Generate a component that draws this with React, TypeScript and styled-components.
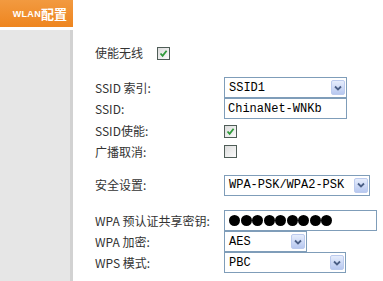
import styled, { createGlobalStyle } from "styled-components"

const GlobalStyle = createGlobalStyle`
  html, body {
    margin: 0;
    padding: 0;
    background: #fff;
  }
  body {
    width: 383px;
    height: 281px;
    overflow: hidden;
    font-family: "Noto Sans CJK SC", "Noto Sans", sans-serif;
  }
`

const Page = styled.div`
  display: flex;
  width: 383px;
  height: 281px;
`

const Sidebar = styled.div`
  width: 73px;
  display: flex;
  flex-direction: column;
`

const SideHeader = styled.div`
  height: 27px;
  background: linear-gradient(#f29a40, #ee851f);
  color: #fff;
  font-weight: bold;
  display: flex;
  align-items: center;
  justify-content: flex-end;
  padding-right: 6px;
  box-sizing: border-box;
`

const HeaderLatin = styled.span`
  font-family: "Liberation Sans", sans-serif;
  font-size: 9px;
  letter-spacing: 0.3px;
`

const HeaderCjk = styled.span`
  font-family: "Noto Sans CJK SC", sans-serif;
  font-size: 13px;
  line-height: 1;
`

const SideBody = styled.div`
  flex: 1;
  margin-top: 3px;
  background: #e6e6e6;
  border-right: 3px solid #d2d2d2;
`

const Main = styled.div`
  flex: 1;
  padding: 43px 0 0 22px;
`

const Row = styled.div<{ $h: number; $mt?: number; $label?: number }>`
  display: grid;
  grid-template-columns: ${(p) => p.$label ?? 129}px auto;
  align-items: center;
  height: ${(p) => p.$h}px;
  margin-top: ${(p) => p.$mt ?? 0}px;
`

const Label = styled.div`
  font-size: 12px;
  color: #333;
  white-space: nowrap;
  line-height: 1;
`

const Field = styled.div<{ $w: number }>`
  width: ${(p) => p.$w}px;
  height: 21px;
  box-sizing: border-box;
  border: 1px solid #7f9db9;
  background: #fff;
  display: flex;
  align-items: center;
  padding-left: 3px;
  font-family: "Liberation Mono", monospace;
  font-size: 12px;
  color: #000;
`

const SelectValue = styled.span`
  flex: 1;
  padding-left: 1px;
`

const ArrowButton = styled.div`
  width: 14px;
  height: 15px;
  margin-right: 1px;
  box-sizing: border-box;
  border: 1px solid #bccbee;
  border-radius: 2px;
  background: linear-gradient(#e6edfc, #b7c8f0);
  display: flex;
  align-items: center;
  justify-content: center;
`

const Box = styled.div`
  width: 13px;
  height: 13px;
  box-sizing: border-box;
  border: 1px solid #4f5d57;
  background: linear-gradient(135deg, #dcdcdc, #fbfbfb);
  display: flex;
  align-items: center;
  justify-content: center;
`

const Dots = styled.div`
  display: flex;
  gap: 0.5px;
  padding-left: 1px;
`

const Dot = styled.span`
  width: 11px;
  height: 11px;
  border-radius: 50%;
  background: #000;
`

const Chevron = () => (
  <svg width="8" height="6" viewBox="0 0 8 6">
    <path d="M1 1.5 L4 4.5 L7 1.5" fill="none" stroke="#4b5f86" strokeWidth="1.8" />
  </svg>
)

const Check = () => (
  <svg width="9" height="9" viewBox="0 0 9 9">
    <path d="M1.5 4.5 L3.6 6.8 L7.6 1.8" fill="none" stroke="#2f9a3a" strokeWidth="1.8" />
  </svg>
)

const Select = ({ w, value }: { w: number; value: string }) => (
  <Field $w={w}>
    <SelectValue>{value}</SelectValue>
    <ArrowButton>
      <Chevron />
    </ArrowButton>
  </Field>
)

const Checkbox = ({ on }: { on?: boolean }) => <Box>{on && <Check />}</Box>

export default function App() {
  return (
    <>
      <GlobalStyle />
      <Page>
        <Sidebar>
          <SideHeader>
            <HeaderLatin>WLAN</HeaderLatin>
            <HeaderCjk>配置</HeaderCjk>
          </SideHeader>
          <SideBody />
        </Sidebar>
        <Main>
          <Row $h={20} $label={62}>
            <Label>使能无线</Label>
            <Checkbox on />
          </Row>
          <Row $h={21} $mt={14}>
            <Label>SSID 索引:</Label>
            <Select w={123} value="SSID1" />
          </Row>
          <Row $h={21}>
            <Label>SSID:</Label>
            <Field $w={123}>ChinaNet-WNKb</Field>
          </Row>
          <Row $h={24}>
            <Label>SSID使能:</Label>
            <Checkbox on />
          </Row>
          <Row $h={17}>
            <Label>广播取消:</Label>
            <Checkbox />
          </Row>
          <Row $h={22} $mt={14}>
            <Label>安全设置:</Label>
            <Select w={146} value="WPA-PSK/WPA2-PSK" />
          </Row>
          <Row $h={21} $mt={14}>
            <Label>WPA 预认证共享密钥:</Label>
            <Field $w={153}>
              <Dots>
                {Array.from({ length: 9 }).map((_, i) => (
                  <Dot key={i} />
                ))}
              </Dots>
            </Field>
          </Row>
          <Row $h={21}>
            <Label>WPA 加密:</Label>
            <Select w={83} value="AES" />
          </Row>
          <Row $h={21}>
            <Label>WPS 模式:</Label>
            <Select w={122} value="PBC" />
          </Row>
        </Main>
      </Page>
    </>
  )
}
